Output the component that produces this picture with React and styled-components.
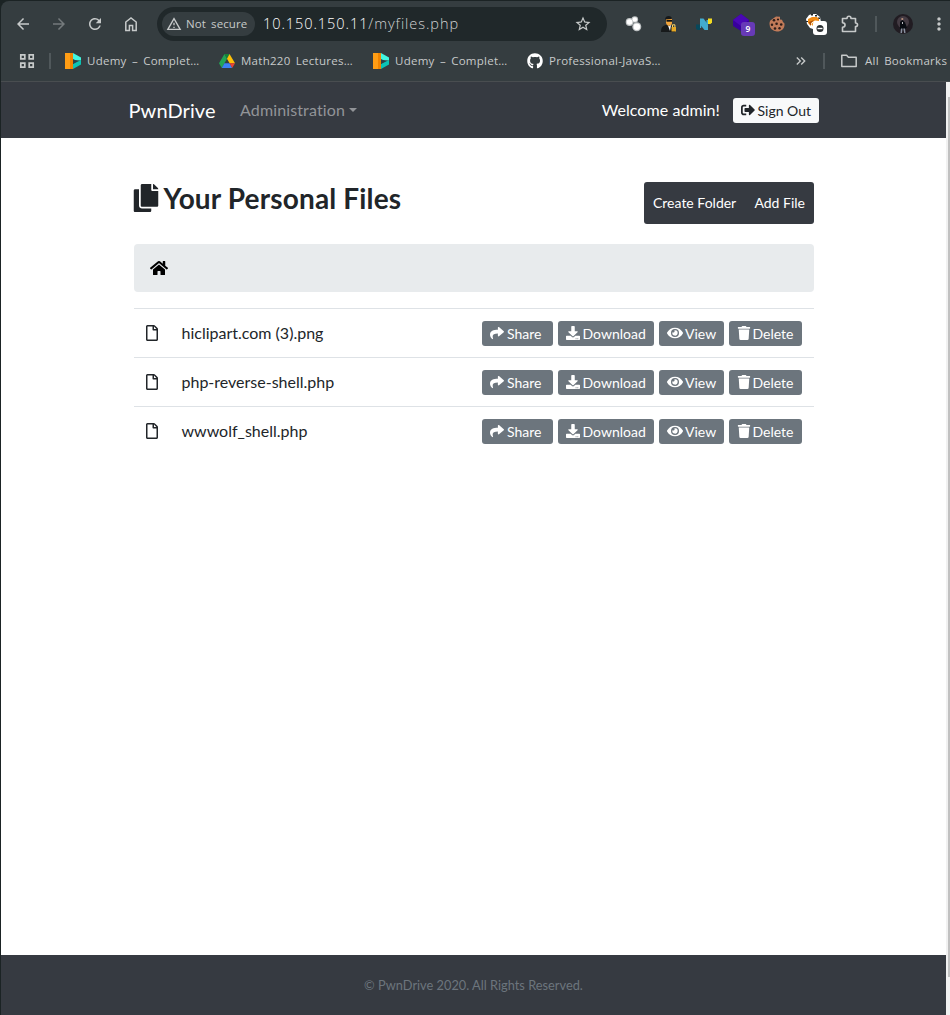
import React from "react";
import styled, { createGlobalStyle } from "styled-components";
import { FaCopy, FaHome, FaRegFile, FaShare, FaDownload, FaEye, FaTrash, FaSignOutAlt, FaGithub } from "react-icons/fa";
import { MdArrowBack, MdArrowForward, MdRefresh, MdStarBorder, MdMoreVert, MdKeyboardDoubleArrowRight, MdOutlineWarningAmber } from "react-icons/md";

const GlobalStyle = createGlobalStyle`
  * { box-sizing: border-box; }
  body { margin: 0; background: #1b2324; font-family: Lato, sans-serif; font-size: 16px; line-height: 1.5; color: #212529; font-variant-ligatures: none; }
  svg { display: block; flex: none; }
`;

const Window = styled.div`
  width: 950px;
  height: 1015px;
  display: flex;
  flex-direction: column;
  overflow: hidden;
  padding-left: 1px;
`;

const BrowserChrome = styled.header`
  height: 81px;
  flex: none;
  margin-top: 1px;
  background: #353d40;
  border-top-left-radius: 8px;
  border-bottom: 1px solid #494d50;
  font-family: "Open Sans", "Noto Sans", sans-serif;
  color: #c7caca;
`;

const Toolbar = styled.div`
  height: 45px;
  display: flex;
  align-items: center;
  padding-left: 12px;
`;

const Slot = styled.div`
  flex: none;
  width: 36px;
  padding-left: ${(p) => p.$pad || 0}px;
  display: flex;
  align-items: center;
  color: ${(p) => p.$color || "#c7caca"};
`;

const AddressBar = styled.div`
  flex: none;
  width: 450px;
  height: 34px;
  border-radius: 17px;
  background: #20282a;
  display: flex;
  align-items: center;
  padding: 0 15px 0 5px;
  margin-right: 15px;
`;

const SecurityChip = styled.div`
  width: 93px;
  height: 24px;
  border-radius: 12px;
  background: #353d40;
  display: flex;
  align-items: center;
  gap: 4px;
  padding-left: 4px;
  font-size: 11.5px;
  letter-spacing: 0.1px;
  word-spacing: 2px;
  white-space: nowrap;
`;

const Url = styled.div`
  flex: 1;
  margin-left: 8px;
  font-size: 14.5px;
  font-weight: 300;
  letter-spacing: 0.94px;
  color: #d0d3d3;
  span { color: #fff; }
`;

const Divider = styled.div`
  flex: none;
  width: 2px;
  height: 16px;
  background: #50585b;
  margin: 0 ${(p) => p.$right}px 0 ${(p) => p.$left}px;
`;

const BookmarkBar = styled.nav`
  height: 29px;
  display: flex;
  align-items: center;
  padding-left: 18px;
  font-size: 11.5px;
  letter-spacing: 0.27px;
  word-spacing: 2px;
  white-space: nowrap;
`;

const Bookmark = styled.div`
  flex: none;
  display: flex;
  align-items: center;
  gap: ${(p) => p.$gap ?? 6}px;
  width: ${(p) => p.$w}px;
`;

const Spacer = styled.div`
  flex: 1;
`;

const Viewport = styled.div`
  flex: 1;
  display: flex;
  min-height: 0;
`;

const Page = styled.div`
  width: 945px;
  display: flex;
  flex-direction: column;
  background: #fff;
`;

const ScrollTrack = styled.div`
  width: 4px;
  background: #f1f1f1;
  padding: 15px 0 0 2px;
`;

const ScrollThumb = styled.div`
  height: 880px;
  background: #c1c1c1;
`;

const Navbar = styled.div`
  height: 56px;
  background: #363a41;
  display: flex;
  align-items: center;
  padding: 0 127px 0 127.5px;
  white-space: nowrap;
`;

const Brand = styled.div`
  width: 111.5px;
  font-size: 20px;
  letter-spacing: 0.1px;
  color: #fff;
`;

const NavLink = styled.div`
  display: flex;
  align-items: center;
  gap: 4px;
  color: #929498;
  letter-spacing: 0.13px;
  flex: 1;
  &::after {
    content: "";
    border-top: 4.8px solid;
    border-left: 4.8px solid transparent;
    border-right: 4.8px solid transparent;
  }
`;

const Welcome = styled.div`
  color: #fff;
  letter-spacing: 0.07px;
  margin-right: 13px;
`;

const Button = styled.button`
  flex: none;
  height: 25px;
  width: ${(p) => p.$w}px;
  display: flex;
  align-items: center;
  gap: ${(p) => p.$gap ?? 3}px;
  padding: 0 0 0 ${(p) => p.$pad ?? 8}px;
  border: 0;
  border-radius: 3px;
  font: 14px/21px Lato, sans-serif;
  white-space: nowrap;
  color: ${(p) => (p.$light ? "#212529" : "#fff")};
  background: ${(p) => (p.$light ? "#f8f9fa" : "#6c757d")};
`;

const Main = styled.main`
  flex: 1;
  width: 680px;
  margin: 44px 0 0 133px;
`;

const TitleRow = styled.div`
  display: flex;
  justify-content: space-between;
  height: 62px;
`;

const Title = styled.h1`
  margin: 0 0 0 -2.5px;
  height: 32px;
  display: flex;
  align-items: center;
  gap: 4px;
  font-size: 28px;
  font-weight: 700;
  line-height: 32px;
  letter-spacing: 0.15px;
`;

const ActionBar = styled.div`
  width: 170px;
  height: 42px;
  border-radius: 3px;
  background: #363a41;
  color: #fff;
  font-size: 14px;
  display: flex;
  align-items: center;
  justify-content: space-between;
  padding: 0 9px 2px;
`;

const Breadcrumb = styled.div`
  height: 48px;
  border-radius: 4px;
  background: #e8ebed;
  display: flex;
  align-items: center;
  padding-left: 15.5px;
  margin-bottom: 16px;
  color: #000;
`;

const FileRow = styled.div`
  height: 49px;
  border-top: 1px solid #dee2e6;
  display: flex;
  align-items: center;
  padding: 0 12px 0 9.5px;
`;

const FileName = styled.div`
  flex: 1;
  margin-left: 22px;
`;

const Actions = styled.div`
  display: flex;
  gap: 5px;
`;

const Footer = styled.footer`
  height: 60px;
  background: #363a41;
  color: #6c757d;
  display: flex;
  align-items: center;
  justify-content: center;
  padding-top: 2px;
  font-size: 12.8px;
`;

const files = ["hiclipart.com (3).png", "php-reverse-shell.php", "wwwolf_shell.php"];

const AppsIcon = () => (
  <svg width="16" height="16" viewBox="0 0 16 16" fill="none" stroke="#c7caca" strokeWidth="1.7">
    <path d="M1.8 1.8h4v4h-4zM10.2 1.8h4v4h-4zM1.8 10.2h4v4h-4zM10.2 10.2h4v4h-4z" />
  </svg>
);

const HomeOutline = () => (
  <svg width="18" height="18" viewBox="0 0 18 18" fill="none" stroke="currentColor" strokeWidth="1.5">
    <path d="M3.8 15.5V7L9 3l5.2 4v8.5h-3.6v-5H7.4v5z" />
  </svg>
);

const PuzzleOutline = () => (
  <svg width="20" height="20" viewBox="0 0 20 20" fill="none" stroke="currentColor" strokeWidth="1.6" strokeLinejoin="round">
    <path d="M2.5 4.5H7c0-3 4-3 4 0h4.5V9c2.7 0 2.7 3.6 0 3.6v4.9h-13v-4.2c3.4-.2 3.4-4.4 0-4.6z" />
  </svg>
);

const FolderOutline = () => (
  <svg width="18" height="14" viewBox="0 0 18 14" fill="none" stroke="currentColor" strokeWidth="1.5" strokeLinejoin="round">
    <path d="M1.8 1.3h4.8l1.8 2h7.8v9.2H1.8z" />
  </svg>
);

const CourseIcon = () => (
  <svg width="16" height="16" viewBox="0 0 16 16">
    <path d="M0 0h5v16H0z" fill="#ff9d14" />
    <path d="M5 0h3v16H5z" fill="#f08300" />
    <path d="M8 0l8 4.5v3L8 7z" fill="#42f5df" />
    <path d="M16 7v4.5L8 16v-5z" fill="#0ac3b4" />
    <path d="M8 6l4 2-4 3z" fill="#29424a" />
  </svg>
);

const DriveIcon = () => (
  <svg width="16" height="14" viewBox="0 0 16 14">
    <path d="M5.5 0L8 4.8 2.8 14 0 9.3z" fill="#23a455" />
    <path d="M5.5 0h5L8 4.8z" fill="#168038" />
    <path d="M10.5 0L16 9.3h-5.4L8 4.8z" fill="#ffc107" />
    <path d="M5.4 9.3h5.2L13.2 14H2.8z" fill="#3b82f5" />
    <path d="M10.6 9.3H16L13.2 14z" fill="#ea4335" />
  </svg>
);

const DotsExtension = () => (
  <svg width="18" height="18" viewBox="0 0 18 18">
    <g fill="#bfc3c4"><circle cx="4.6" cy="7" r="3.9" /><circle cx="9.8" cy="4.5" r="3.3" /><circle cx="11.8" cy="11.8" r="4.5" /></g>
    <g fill="#fff"><circle cx="4.6" cy="7" r="2.8" /><circle cx="9.8" cy="4.5" r="2.3" /><circle cx="11.8" cy="11.8" r="3.3" /></g>
  </svg>
);

const AgentExtension = () => (
  <svg width="18" height="18" viewBox="0 0 18 18">
    <path d="M1 17c0-5 2-7 6-7 4 0 7 2 8 7z" fill="#171a1b" />
    <path d="M6 3h6v5c0 3.5-5 4-6 0z" fill="#f2a53b" />
    <path d="M5 4.5C5 0 12 0 12 4z" fill="#16191b" />
    <path d="M6.5 5H12v1.7H6.5z" fill="#101214" />
    <path d="M8 10.5l1.5.7L11 10l-1 6z" fill="#fff" />
    <path d="M11.5 12H16v4.5h-4.5z" fill="#e6a927" />
    <path d="M12.5 12V9.8h2.4V12" fill="none" stroke="#ffd766" />
  </svg>
);

const RibbonExtension = () => (
  <svg width="18" height="18" viewBox="0 0 18 18">
    <path d="M1 9.5h4V15H2.5L1 13.5z" fill="#07485b" />
    <path d="M5 3.5h3.5l4.5 6V15H9.5L5 9.5z" fill="#42acd0" />
    <path d="M13 3.5h4v4L15.5 9H13z" fill="#f3dc22" />
    <path d="M11.5 5H13v5l-1.5-2z" fill="#42acd0" />
    <path d="M5 9h1.2v4H5z" fill="#42acd0" />
  </svg>
);

const BadgeExtension = () => (
  <svg width="23" height="24" viewBox="0 0 23 24">
    <path d="M9 2l8 6v6l-8 5-8-5V8z" fill="#38009c" />
    <path d="M9 2l8 6-8 6-8-6z" fill="#4a08b5" />
    <rect x="9" y="10" width="14" height="14" rx="3" fill="#673ab7" />
    <text x="16" y="20.3" textAnchor="middle" fill="#fff" fontFamily="Noto Sans" fontWeight="600" fontSize="8.5">9</text>
  </svg>
);

const CookieExtension = () => (
  <svg width="16" height="16" viewBox="0 0 16 16">
    <path d="M7 .5l4 .3v2.7l2 .2 1 2.2 1.5 1.5c.5 5-3 8.1-7.5 8.1A7.3 7.3 0 0 1 .5 8C.5 6 1 4.5 2 4z" fill="#c17b59" />
    <g fill="#2d1c18"><circle cx="5" cy="4.3" r="1.3" /><circle cx="9" cy="3.5" r="1.1" /><circle cx="3" cy="8.7" r="1.2" /><circle cx="7.6" cy="7.8" r="1.3" /><circle cx="12.2" cy="8.5" r="1.3" /><circle cx="6" cy="12.5" r="1.3" /><circle cx="10.5" cy="12.3" r="1.2" /></g>
  </svg>
);

const MaskExtension = () => (
  <svg width="21" height="22" viewBox="0 0 21 22">
    <path d="M0 6l3-4 3-1h4l4 3 1 5-4 2-4 5-3-1-3-4z" fill="#fff" />
    <path d="M5 1h2v1.5H5zM9 2h2v1.5H9zM12 4.5h2V6h-2zM0 8h2v1H0z" fill="#20282a" />
    <path d="M2 6l4-2h5l2 2v2l-4-.5-4 2.5v3l-3-3z" fill="#f28c16" />
    <path d="M3 9l5-2-3 3v2H4z" fill="#a84d08" />
    <path d="M5 11l3-2h5v4H7z" fill="#f29a2c" />
    <rect x="7" y="8" width="14" height="14" rx="3" fill="#fff" />
    <circle cx="14" cy="15.5" r="3.5" fill="#2a2f31" />
    <path d="M11.5 15.5h5" stroke="#fff" strokeWidth="1.4" />
  </svg>
);

const Avatar = () => (
  <svg width="20" height="20" viewBox="0 0 20 20">
    <circle cx="10" cy="10" r="10" fill="#211c22" />
    <circle cx="10" cy="8" r="6" fill="#443b43" />
    <circle cx="9.3" cy="5" r="1.1" fill="#b9937f" />
    <path d="M7 8l2.5-2L12 8.5l2 5-2 1.5H7z" fill="#090c12" />
    <path d="M8 14.5h1.5L9 19H7.5zM10.3 14.5H12l.5 4.5h-1.3z" fill="#8991a0" />
    <path d="M9 8h1v2H9z" fill="#b9b9bf" />
  </svg>
);

export default function App() {
  return (
    <Window>
      <GlobalStyle />
      <BrowserChrome>
        <Toolbar>
          <Slot $pad={1}><MdArrowBack size={18} /></Slot>
          <Slot $pad={1} $color="#747a7c"><MdArrowForward size={18} /></Slot>
          <Slot $pad={1}><MdRefresh size={18} /></Slot>
          <Slot $pad={1}><HomeOutline /></Slot>
          <AddressBar>
            <SecurityChip><MdOutlineWarningAmber size={16} />Not secure</SecurityChip>
            <Url><span>10.150.150.11</span>/myfiles.php</Url>
            <MdStarBorder size={18} />
          </AddressBar>
          <Slot $pad={3}><DotsExtension /></Slot>
          <Slot $pad={2}><AgentExtension /></Slot>
          <Slot $pad={1}><RibbonExtension /></Slot>
          <Slot $pad={2}><BadgeExtension /></Slot>
          <Slot $pad={3}><CookieExtension /></Slot>
          <Slot $pad={4}><MaskExtension /></Slot>
          <Slot $pad={2}><PuzzleOutline /></Slot>
          <Divider $left={1} $right={16} />
          <Slot><Avatar /></Slot>
          <Slot><MdMoreVert size={20} /></Slot>
        </Toolbar>
        <BookmarkBar>
          <AppsIcon />
          <Divider $left={14} $right={14} />
          <Bookmark $w={154}><CourseIcon /><span>Udemy – Complet…</span></Bookmark>
          <Bookmark $w={154}><DriveIcon /><span>Math220 Lectures…</span></Bookmark>
          <Bookmark $w={154}><CourseIcon /><span>Udemy – Complet…</span></Bookmark>
          <Bookmark $w={150}><FaGithub size={16} color="#fff" /><span>Professional-JavaS…</span></Bookmark>
          <Spacer />
          <MdKeyboardDoubleArrowRight size={16} />
          <Divider $left={14} $right={15} />
          <Bookmark $w={110} $gap={7}><FolderOutline /><span>All Bookmarks</span></Bookmark>
        </BookmarkBar>
      </BrowserChrome>
      <Viewport>
        <Page>
          <Navbar>
            <Brand>PwnDrive</Brand>
            <NavLink>Administration</NavLink>
            <Welcome>Welcome admin!</Welcome>
            <Button $light $w={86} $gap={2.5}><FaSignOutAlt size={14} />Sign Out</Button>
          </Navbar>
          <Main>
            <TitleRow>
              <Title><FaCopy size={28} />Your Personal Files</Title>
              <ActionBar><span>Create Folder</span><span>Add File</span></ActionBar>
            </TitleRow>
            <Breadcrumb><FaHome size={18} /></Breadcrumb>
            {files.map((name) => (
              <FileRow key={name}>
                <FaRegFile size={16} />
                <FileName>{name}</FileName>
                <Actions>
                  <Button $w={71}><FaShare size={14} />Share</Button>
                  <Button $w={96} $gap={2.5}><FaDownload size={14} />Download</Button>
                  <Button $w={65} $gap={2}><FaEye size={16} />View</Button>
                  <Button $w={73} $gap={2} $pad={7.5}><FaTrash size={14} />Delete</Button>
                </Actions>
              </FileRow>
            ))}
          </Main>
          <Footer>© PwnDrive 2020. All Rights Reserved.</Footer>
        </Page>
        <ScrollTrack><ScrollThumb /></ScrollTrack>
      </Viewport>
    </Window>
  );
}
